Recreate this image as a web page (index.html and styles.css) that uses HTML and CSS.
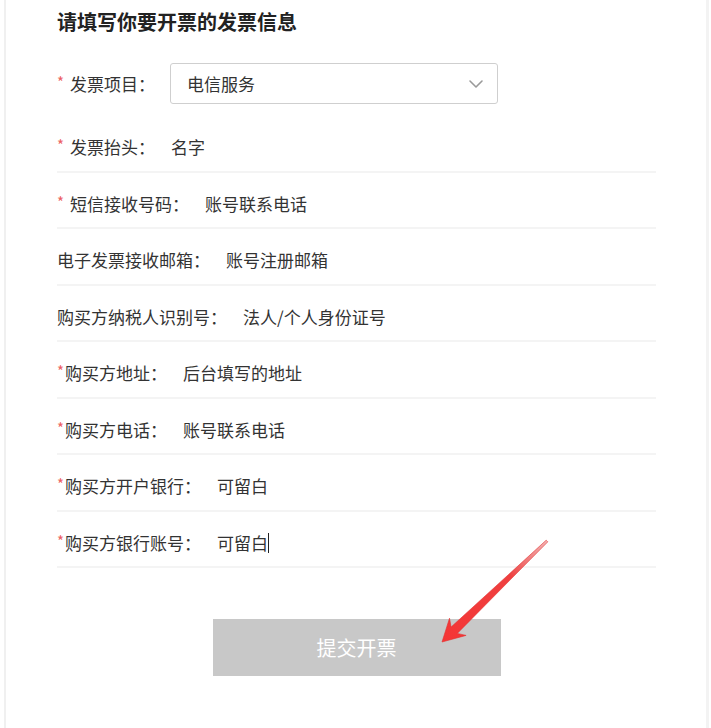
FILE: index.html
```html
<!DOCTYPE html>
<html lang="zh-CN">
<head>
<meta charset="utf-8">
<title>发票信息</title>
<link rel="stylesheet" href="styles.css">
</head>
<body>
<div class="page">
  <div class="form">
    <h2 class="title">请填写你要开票的发票信息</h2>

    <div class="select-row">
      <span class="label"><span class="req sp">*</span>发票项目：</span>
      <div class="select">
        <span class="select-text">电信服务</span>
        <svg class="chevron" width="16" height="10" viewBox="0 0 16 10"><polyline points="2,2 8,8 14,2" fill="none" stroke="#9a9a9a" stroke-width="1.6" stroke-linecap="round" stroke-linejoin="round"/></svg>
      </div>
    </div>

    <div class="rows">
      <div class="row"><span class="label"><span class="req sp">*</span>发票抬头：</span><span class="value">名字</span></div>
      <div class="row"><span class="label"><span class="req sp">*</span>短信接收号码：</span><span class="value">账号联系电话</span></div>
      <div class="row"><span class="label">电子发票接收邮箱：</span><span class="value">账号注册邮箱</span></div>
      <div class="row"><span class="label">购买方纳税人识别号：</span><span class="value">法人/个人身份证号</span></div>
      <div class="row"><span class="label"><span class="req">*</span>购买方地址：</span><span class="value">后台填写的地址</span></div>
      <div class="row"><span class="label"><span class="req">*</span>购买方电话：</span><span class="value">账号联系电话</span></div>
      <div class="row"><span class="label"><span class="req">*</span>购买方开户银行：</span><span class="value">可留白</span></div>
      <div class="row"><span class="label"><span class="req">*</span>购买方银行账号：</span><span class="value">可留白<span class="caret"></span></span></div>
    </div>

    <div class="actions">
      <button class="submit" type="button">提交开票</button>
    </div>
  </div>

  <svg class="arrow" width="125" height="115" viewBox="0 0 125 115">
    <defs>
      <linearGradient id="ag" x1="117" y1="6" x2="12" y2="107" gradientUnits="userSpaceOnUse">
        <stop offset="0" stop-color="#e87070" stop-opacity="0.55"/>
        <stop offset="0.35" stop-color="#ef4040"/>
        <stop offset="1" stop-color="#f53535"/>
      </linearGradient>
    </defs>
    <polygon points="12,107 36.1,100.4 27.3,98.4 117.8,6.8 116.2,5.2 21.1,92 19.5,83.2" fill="url(#ag)" stroke="#e23030" stroke-width="0.6" stroke-linejoin="round"/>
  </svg>
</div>
</body>
</html>
```

FILE: styles.css
```css
html, body {
  margin: 0;
  padding: 0;
  background: #fff;
}

body {
  font-family: "Noto Sans CJK SC", "Microsoft YaHei", sans-serif;
  color: #333;
}

.page {
  position: relative;
  margin-left: 4px;
  width: 700px;
  min-height: 728px;
  border-left: 2px solid #f0f0f0;
  border-right: 3px solid #f3f3f3;
}

.form {
  padding: 8px 0 0 51px;
}

.title {
  margin: 0;
  font-size: 20px;
  line-height: 28px;
  font-weight: bold;
  color: #222;
}

.select-row {
  display: flex;
  align-items: center;
  margin-top: 27px;
  height: 41px;
}

.label {
  font-size: 17px;
  line-height: 25px;
  color: #333;
  white-space: nowrap;
}

.req {
  display: inline-block;
  width: 8px;
  color: #ec5f63;
  font-size: 15px;
  vertical-align: top;
  line-height: 22px;
}

.req.sp {
  margin-right: 5px;
}

.select {
  box-sizing: border-box;
  margin-left: 15px;
  width: 328px;
  height: 41px;
  border: 1px solid #cfcfcf;
  border-radius: 3px;
  display: flex;
  align-items: center;
  justify-content: space-between;
  padding: 0 13px 0 16px;
}

.select-text {
  font-size: 17px;
  color: #333;
}

.chevron {
  display: block;
}

.rows {
  margin-top: 12px;
  width: 599px;
}

.row {
  display: flex;
  align-items: flex-start;
  height: 54.5px;
  box-sizing: content-box;
  border-bottom: 2px solid #f4f4f4;
}

.row .label,
.row .value {
  margin-top: 18px;
}

.value {
  margin-left: 16px;
  font-size: 17px;
  line-height: 25px;
  color: #333;
  white-space: nowrap;
}

.caret {
  display: inline-block;
  width: 1px;
  height: 20px;
  background: #222;
  vertical-align: -3px;
}

.actions {
  display: flex;
  justify-content: center;
  width: 599px;
  margin-top: 51px;
}

.submit {
  width: 288px;
  height: 57px;
  border: none;
  border-radius: 0;
  background: #c8c8c8;
  color: #fff;
  font-family: "Noto Sans CJK SC", "Microsoft YaHei", sans-serif;
  font-size: 20px;
  padding: 0;
}

.arrow {
  position: absolute;
  left: 424px;
  top: 535px;
}
```
